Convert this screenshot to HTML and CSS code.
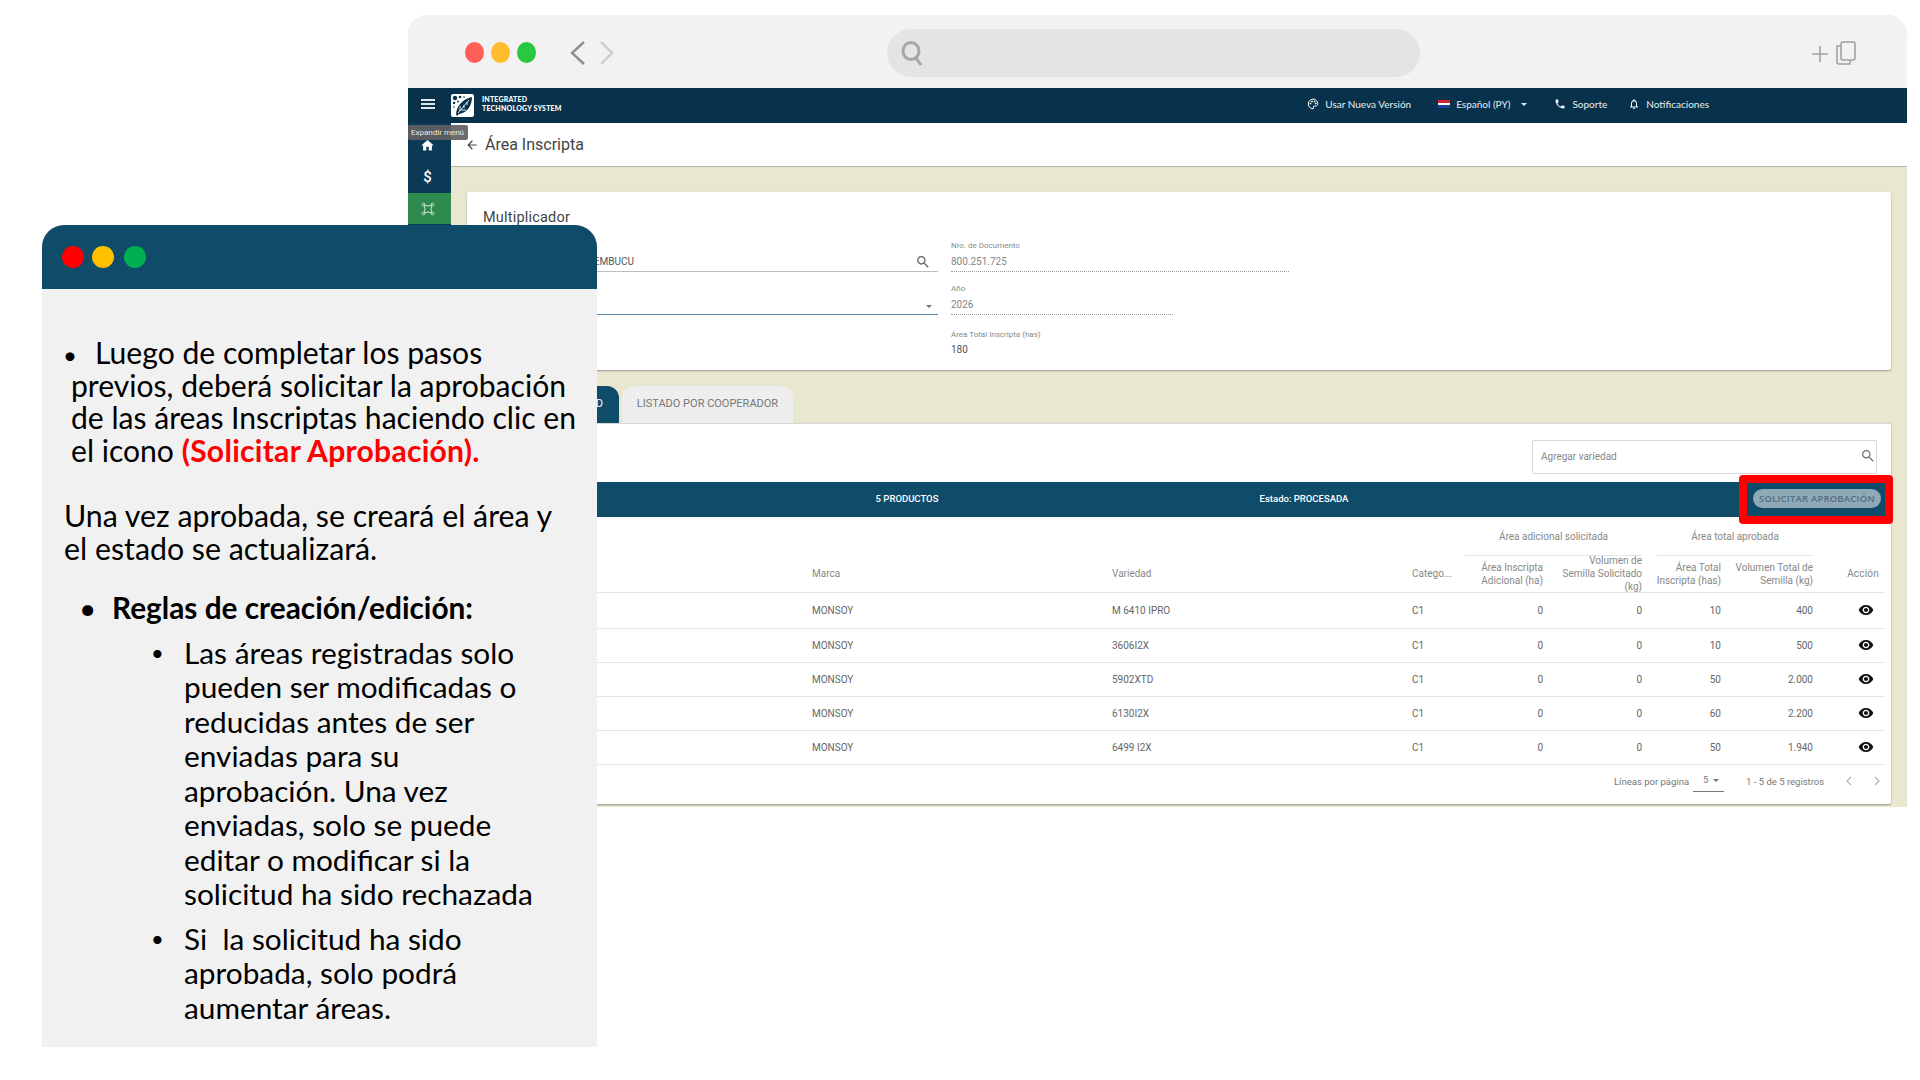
FILE: index.html
```html
<!DOCTYPE html>
<html lang="es">
<head>
<meta charset="UTF-8">
<meta name="viewport" content="width=device-width, initial-scale=1.0">
<title>Área Inscripta</title>
<link rel="stylesheet" href="styles.css">
</head>
<body>
  <svg class="sprites" width="0" height="0">
    <symbol id="eye" viewBox="0 0 24 24"><path d="M12 4.5C7 4.5 2.73 7.61 1 12c1.73 4.39 6 7.5 11 7.5s9.27-3.11 11-7.5c-1.73-4.39-6-7.5-11-7.5zM12 17c-2.76 0-5-2.24-5-5s2.24-5 5-5 5 2.24 5 5-2.24 5-5 5zm0-8c-1.66 0-3 1.34-3 3s1.34 3 3 3 3-1.34 3-3-1.34-3-3-3z"/></symbol>
    <symbol id="search" viewBox="0 0 24 24"><path d="M15.5 14h-.79l-.28-.27C15.41 12.59 16 11.11 16 9.5 16 5.91 13.09 3 9.5 3S3 5.91 3 9.5 5.91 16 9.5 16c1.61 0 3.09-.59 4.23-1.57l.27.28v.79l5 4.99L20.49 19l-4.99-5zm-6 0C7.01 14 5 11.99 5 9.5S7.01 5 9.5 5 14 7.01 14 9.5 11.99 14 9.5 14z"/></symbol>
  </svg>

  <!-- browser window -->
  <div class="browser">
    <div class="toolbar">
      <div class="dots">
        <span class="dot dot-red"></span>
        <span class="dot dot-yellow"></span>
        <span class="dot dot-green"></span>
      </div>
      <svg class="nav-arrows" width="44" height="24" viewBox="0 0 44 24" fill="none" stroke-width="2.4">
        <path d="M14 1 L2 12 L14 23" stroke="#8f8f8f"/>
        <path d="M31 1 L42 12 L31 23" stroke="#cbcbcb"/>
      </svg>
      <div class="address">
        <svg width="24" height="26" viewBox="0 0 24 26" fill="none" stroke="#a6a6a6" stroke-width="3">
          <ellipse cx="11" cy="11" rx="8" ry="8.5"/>
          <path d="M16 18 L21 25"/>
        </svg>
      </div>
      <svg class="tab-tools" width="46" height="24" viewBox="0 0 46 24" fill="none" stroke="#a0a0a0" stroke-width="1.6">
        <path d="M1 13 H17 M9 5 V21"/>
        <rect x="30" y="1" width="14" height="18" rx="2"/>
        <path d="M30 5 H26 V21 Q26 23 28 23 H39 V19"/>
      </svg>
    </div>

    <header class="app-header">
      <svg class="menu-icon" width="14" height="10" viewBox="0 0 14 10" fill="#e3e8ec">
        <rect width="14" height="2"/><rect y="4" width="14" height="2"/><rect y="8" width="14" height="2"/>
      </svg>
      <svg class="logo" width="23" height="23" viewBox="0 0 23 23">
        <rect width="23" height="23" rx="2" fill="#fff"/>
        <g fill="#08324b">
          <circle cx="4" cy="4" r="2.2"/><circle cx="9" cy="3" r="1.3"/><circle cx="13" cy="3" r="0.8"/>
          <circle cx="3" cy="9" r="1.2"/><circle cx="7" cy="7.5" r="0.9"/><circle cx="3" cy="13" r="0.8"/>
          <path d="M5 20 C6 11 12 5 21 3 C21 12 16 19 8 20 L6 22 Z"/>
        </g>
        <path d="M7 19 L18 6 M10 16 H15 M9 12 V17 M13 11 V14 M16 8 V11" stroke="#fff" stroke-width="0.9" fill="none"/>
      </svg>
      <div class="logo-text">INTEGRATED<br>TECHNOLOGY SYSTEM</div>
      <nav class="top-nav">
        <a class="nav-new">
          <svg width="12" height="12" viewBox="0 0 24 24" fill="none" stroke="#fff" stroke-width="2"><path d="M12 2.5C6.5 2.5 2.5 6.8 2.5 12s4.3 9.5 9.5 9.5c1 0 1.5-.7 1.5-1.5 0-1-.8-1.3-.8-2.3 0-1 .8-1.7 1.8-1.7H17c2.7 0 4.5-2 4.5-4.5 0-5-4.3-9.5-9.5-9.5z"/><circle cx="7" cy="11" r="1" fill="#fff"/><circle cx="10" cy="7" r="1" fill="#fff"/><circle cx="15" cy="7" r="1" fill="#fff"/><circle cx="17.5" cy="11" r="1" fill="#fff"/></svg>
          Usar Nueva Versión
        </a>
        <a class="nav-lang">
          <span class="flag"></span>
          Español (PY)
          <span class="caret"></span>
        </a>
        <a class="nav-support">
          <svg width="12" height="12" viewBox="0 0 24 24" fill="#fff"><path d="M6.62 10.79c1.44 2.83 3.76 5.14 6.59 6.59l2.2-2.2c.27-.27.67-.36 1.02-.24 1.12.37 2.33.57 3.57.57.55 0 1 .45 1 1V20c0 .55-.45 1-1 1-9.39 0-17-7.61-17-17 0-.55.45-1 1-1h3.5c.55 0 1 .45 1 1 0 1.25.2 2.45.57 3.57.11.35.03.74-.25 1.02l-2.2 2.2z"/></svg>
          Soporte
        </a>
        <a class="nav-bell">
          <svg width="12" height="12" viewBox="0 0 24 24" fill="#fff"><path d="M12 22c1.1 0 2-.9 2-2h-4c0 1.1.9 2 2 2zm6-6v-5c0-3.07-1.63-5.64-4.5-6.32V4c0-.83-.67-1.5-1.5-1.5s-1.5.67-1.5 1.5v.68C7.64 5.36 6 7.92 6 11v5l-2 2v1h16v-1l-2-2zm-2 1H8v-6c0-2.48 1.51-4.5 4-4.5s4 2.02 4 4.5v6z"/></svg>
          Notificaciones
        </a>
      </nav>
    </header>

    <div class="app-body">
      <aside class="sidebar">
        <div class="side-item side-home">
          <svg width="15" height="15" viewBox="0 0 24 24" fill="#fff"><path d="M10 20v-6h4v6h5v-8h3L12 3 2 12h3v8z"/></svg>
        </div>
        <div class="side-item side-money">$</div>
        <div class="side-item side-active">
          <svg width="14" height="14" viewBox="0 0 14 14" fill="none" stroke="#cfe3d5" stroke-width="1"><path d="M3 3 Q7 5 11 3 Q9 7 11 11 Q7 9 3 11 Q5 7 3 3Z"/><circle cx="2.5" cy="2.5" r="1.3"/><circle cx="11.5" cy="2.5" r="1.3"/><circle cx="2.5" cy="11.5" r="1.3"/><circle cx="11.5" cy="11.5" r="1.3"/></svg>
        </div>
        <div class="tooltip">Expandir menú</div>
      </aside>

      <main class="main">
        <div class="page-bar">
          <svg width="14" height="14" viewBox="0 0 24 24" fill="#444"><path d="M20 11H7.83l5.59-5.59L12 4l-8 8 8 8 1.41-1.41L7.83 13H20v-2z"/></svg>
          <h1>Área Inscripta</h1>
        </div>

        <div class="content">
          <section class="card card-top">
            <h2>Multiplicador</h2>
            <div class="form-grid">
              <div class="form-col">
                <div class="field">
                  <span class="field-label"></span>
                  <div class="field-value field-solid field-dept">
                    ÑEEMBUCU
                    <svg class="field-icon" width="16" height="16" fill="#666"><use href="#search"/></svg>
                  </div>
                </div>
                <div class="field field-second">
                  <span class="field-label"></span>
                  <div class="field-value field-focus"><span class="caret caret-dark"></span></div>
                </div>
              </div>
              <div class="form-col">
                <div class="field">
                  <span class="field-label">Nro. de Documento</span>
                  <div class="field-value field-dotted">800.251.725</div>
                </div>
                <div class="field field-second">
                  <span class="field-label">Año</span>
                  <div class="field-value field-dotted field-short">2026</div>
                </div>
                <div class="field field-third">
                  <span class="field-label">Área Total Inscripta (has)</span>
                  <div class="field-value field-plain">180</div>
                </div>
              </div>
            </div>
          </section>

          <div class="tabs">
            <div class="tab tab-active">LISTADO POR VARIEDAD</div>
            <div class="tab">LISTADO POR COOPERADOR</div>
          </div>

          <section class="card card-table">
            <div class="add-row">
              <div class="add-box">
                Agregar variedad
                <svg width="16" height="16" fill="#777"><use href="#search"/></svg>
              </div>
            </div>

            <div class="status-bar">
              <span class="bar-count">5 PRODUCTOS</span>
              <span class="bar-state">Estado: PROCESADA</span>
              <button class="request-btn">SOLICITAR APROBACIÓN</button>
              <div class="highlight"></div>
            </div>

            <div class="table">
              <div class="row-groups">
                <div class="group group-add">Área adicional solicitada</div>
                <div class="group group-total">Área total aprobada</div>
              </div>
              <div class="row row-head">
                <div></div>
                <div>Marca</div>
                <div>Variedad</div>
                <div>Catego...</div>
                <div class="num">Área Inscripta<br>Adicional (ha)</div>
                <div class="num">Volumen de<br>Semilla Solicitado<br>(kg)</div>
                <div class="num">Área Total<br>Inscripta (has)</div>
                <div class="num">Volumen Total de<br>Semilla (kg)</div>
                <div class="act">Acción</div>
              </div>
              <div class="row">
                <div></div><div>MONSOY</div><div>M 6410 IPRO</div><div>C1</div>
                <div class="num">0</div><div class="num">0</div><div class="num">10</div><div class="num">400</div>
                <div class="act"><svg class="eye"><use href="#eye"/></svg></div>
              </div>
              <div class="row">
                <div></div><div>MONSOY</div><div>3606I2X</div><div>C1</div>
                <div class="num">0</div><div class="num">0</div><div class="num">10</div><div class="num">500</div>
                <div class="act"><svg class="eye"><use href="#eye"/></svg></div>
              </div>
              <div class="row">
                <div></div><div>MONSOY</div><div>5902XTD</div><div>C1</div>
                <div class="num">0</div><div class="num">0</div><div class="num">50</div><div class="num">2.000</div>
                <div class="act"><svg class="eye"><use href="#eye"/></svg></div>
              </div>
              <div class="row">
                <div></div><div>MONSOY</div><div>6130I2X</div><div>C1</div>
                <div class="num">0</div><div class="num">0</div><div class="num">60</div><div class="num">2.200</div>
                <div class="act"><svg class="eye"><use href="#eye"/></svg></div>
              </div>
              <div class="row">
                <div></div><div>MONSOY</div><div>6499 I2X</div><div>C1</div>
                <div class="num">0</div><div class="num">0</div><div class="num">50</div><div class="num">1.940</div>
                <div class="act"><svg class="eye"><use href="#eye"/></svg></div>
              </div>
            </div>

            <div class="pager">
              <span>Líneas por página</span>
              <span class="pager-select">5 <span class="caret caret-dark"></span></span>
              <span class="pager-count">1 - 5 de 5 registros</span>
              <svg width="34" height="10" viewBox="0 0 34 10" fill="none" stroke="#b5b5b5" stroke-width="1.2">
                <path d="M5 1 L1 5 L5 9"/><path d="M29 1 L33 5 L29 9"/>
              </svg>
            </div>
          </section>
        </div>
      </main>
    </div>
  </div>

  <!-- instructions window -->
  <div class="panel">
    <div class="panel-head">
      <span class="pdot pdot-red"></span>
      <span class="pdot pdot-yellow"></span>
      <span class="pdot pdot-green"></span>
    </div>
    <div class="panel-body">
      <p class="intro"><span class="bullet">•</span>Luego de completar los pasos<br>previos, deberá solicitar la aprobación<br>de las áreas Inscriptas haciendo clic en<br>el icono <strong class="red">(Solicitar Aprobación).</strong></p>
      <p class="after">Una vez aprobada, se creará el área y<br>el estado se actualizará.</p>
      <p class="rules"><span class="rules-bullet">•</span><strong>Reglas de creación/edición:</strong></p>
      <ul class="sub-list">
        <li>Las áreas registradas solo<br>pueden ser modificadas o<br>reducidas antes de ser<br>enviadas para su<br>aprobación. Una vez<br>enviadas, solo se puede<br>editar o modificar si la<br>solicitud ha sido rechazada</li>
        <li>Si&nbsp; la solicitud ha sido<br>aprobada, solo podrá<br>aumentar áreas.</li>
      </ul>
    </div>
  </div>
</body>
</html>
```

FILE: styles.css
```css
* {
  box-sizing: border-box;
}
html, body {
  margin: 0;
  height: 1080px;
  overflow: hidden;
  background: #fff;
}
body {
  position: relative;
  font-family: Roboto, "Liberation Sans", sans-serif;
  color: #666;
}
.sprites {
  position: absolute;
}

/* browser window */
.browser {
  position: absolute;
  left: 408px;
  top: 15px;
  width: 1499px;
  height: 792px;
  border-radius: 20px 20px 0 0;
  overflow: hidden;
  background: #e9e7cf;
  display: flex;
  flex-direction: column;
}
.toolbar {
  height: 73px;
  background: #f2f2f2;
  display: flex;
  align-items: center;
  padding: 2px 50px 0 57px;
  flex: none;
}
.dots {
  display: flex;
  gap: 7px;
}
.dot {
  width: 19px;
  height: 21px;
  border-radius: 50%;
}
.dot-red { background: #ff5f57; }
.dot-yellow { background: #febc2e; }
.dot-green { background: #28c840; }
.nav-arrows {
  margin-left: 34px;
}
.address {
  margin-left: 273px;
  width: 533px;
  height: 48px;
  border-radius: 24px;
  background: #e4e4e4;
  display: flex;
  align-items: center;
  padding-left: 13px;
}
.tab-tools {
  margin-left: auto;
}

/* app header */
.app-header {
  height: 35px;
  flex: none;
  background: #08324b;
  display: flex;
  align-items: center;
  padding-bottom: 3px;
  color: #fff;
}
.menu-icon {
  margin-left: 13px;
}
.logo {
  margin-left: 16px;
  margin-top: 2px;
}
.logo-text {
  margin-left: 8px;
  font-family: Lato, sans-serif;
  font-size: 7px;
  font-weight: 900;
  line-height: 9px;
  letter-spacing: .2px;
}
.top-nav {
  margin-left: auto;
  padding-right: 198px;
  display: flex;
  align-items: center;
  font-family: Lato, sans-serif;
  font-size: 10px;
  color: #e8eef2;
}
.top-nav a {
  display: flex;
  align-items: center;
  gap: 6px;
}
.nav-lang {
  margin-left: 27px;
}
.nav-support {
  margin-left: 27px;
}
.nav-bell {
  margin-left: 21px;
}
.flag {
  width: 12px;
  height: 8px;
  background: linear-gradient(#d5232f 0 33%, #fff 33% 66%, #1a3f9c 66%);
}
.caret {
  width: 0;
  height: 0;
  border-left: 3px solid transparent;
  border-right: 3px solid transparent;
  border-top: 3px solid #dfe6ea;
  margin-left: 5px;
  display: inline-block;
}
.caret-dark {
  border-top-color: #757575;
}

/* sidebar */
.app-body {
  flex: 1;
  display: flex;
  min-height: 0;
}
.sidebar {
  width: 43px;
  flex: none;
  background: #0a3a55;
  position: relative;
}
.side-item {
  height: 32px;
  display: flex;
  align-items: center;
  justify-content: center;
  padding-right: 4px;
  color: #fff;
}
.side-home {
  height: 38px;
  padding-top: 6px;
}
.side-money {
  font-size: 15px;
  font-weight: 500;
}
.side-active {
  height: 31px;
  background: #2e8b4e;
}
.tooltip {
  position: absolute;
  left: 0;
  top: 2px;
  width: 60px;
  height: 15px;
  border-radius: 2px;
  background: rgba(97, 97, 97, .92);
  color: #e8e8e8;
  font-size: 8px;
  line-height: 15px;
  padding-left: 3px;
  white-space: nowrap;
  z-index: 2;
}

/* page */
.main {
  flex: 1;
  min-width: 0;
  display: flex;
  flex-direction: column;
}
.page-bar {
  height: 44px;
  flex: none;
  background: #fff;
  border-bottom: 1px solid #b9b9a8;
  display: flex;
  align-items: center;
  padding-left: 14px;
  gap: 6px;
}
h1 {
  margin: 0;
  font-size: 16px;
  font-weight: 400;
  color: #444;
}
.content {
  flex: 1;
  padding: 25px 16px 0 16px;
}
.card {
  background: #fff;
  border-radius: 2px;
  box-shadow: 0 1px 2px rgba(0, 0, 0, .35);
}
.card-top {
  height: 178px;
  padding: 16px 15px 0;
}
h2 {
  margin: 0 0 0 1px;
  font-size: 14.5px;
  line-height: 20px;
  font-weight: 400;
  color: #444;
  letter-spacing: .2px;
}
.form-grid {
  margin-top: 13px;
  display: grid;
  grid-template-columns: 456px 338px;
  column-gap: 13px;
}
.field-label {
  display: block;
  height: 10px;
  font-size: 8px;
  line-height: 10px;
  color: #8a8a8a;
}
.field-value {
  position: relative;
  margin-top: 3px;
  height: 18px;
  font-size: 10px;
  line-height: 15px;
  color: #858585;
}
.field-second {
  margin-top: 12px;
}
.field-third {
  margin-top: 15px;
}
.field-solid {
  border-bottom: 1px solid #bdbdbd;
}
.field-dept {
  padding-left: 99px;
  color: #555;
}
.field-focus {
  border-bottom: 1px solid #5a87a3;
  text-align: right;
  padding-right: 6px;
}
.field-icon {
  position: absolute;
  right: 7px;
  top: 0;
}
.field-dotted {
  border-bottom: 1px dotted #9a9a9a;
}
.field-short {
  width: 222px;
}
.field-plain {
  margin-top: 1px;
  line-height: 17px;
  color: #555;
}
.tabs {
  margin-top: 16px;
  height: 37px;
  display: flex;
  gap: 3px;
}
.tab {
  width: 171px;
  background: #eee;
  border-radius: 12px 12px 0 0;
  font-size: 11px;
  line-height: 36px;
  text-align: center;
  color: #777;
}
.tab-active {
  width: 152px;
  background: #0f4c69;
  color: #fff;
  padding-right: 16px;
  text-align: right;
}

/* table card */
.card-table {
  height: 381px;
  border-radius: 0 0 2px 2px;
  border-top: 1px solid #d8d8d8;
}
.add-row {
  height: 58px;
  padding: 16px 14px 0 0;
  display: flex;
  justify-content: flex-end;
}
.add-box {
  width: 345px;
  height: 34px;
  border: 1px solid #d9d9d9;
  border-radius: 2px;
  padding: 0 0 2px 8px;
  display: flex;
  align-items: center;
  justify-content: space-between;
  font-size: 10px;
  color: #888;
}
.status-bar {
  position: relative;
  height: 35px;
  margin-right: 6px;
  background: #0f4c69;
  display: flex;
  align-items: center;
  padding-bottom: 3px;
  color: #fff;
  font-size: 9.5px;
  font-weight: 500;
}
.bar-count {
  margin-left: 340px;
  width: 200px;
  text-align: center;
}
.bar-state {
  margin-left: 197px;
  width: 200px;
  text-align: center;
}
.request-btn {
  margin-left: auto;
  margin-right: 4px;
  width: 128px;
  height: 19px;
  padding: 0;
  border: 0;
  border-radius: 10px;
  background: #8fa9b8;
  color: #4f6e80;
  font-family: "Open Sans", sans-serif;
  font-size: 9.5px;
  font-weight: 600;
  letter-spacing: .2px;
  white-space: nowrap;
}
.highlight {
  position: absolute;
  right: -8px;
  top: -7px;
  bottom: -7px;
  width: 154px;
  border: 8px solid #f00;
  border-radius: 4px;
}
.table {
  margin-right: 6px;
  font-size: 10px;
}
.row-groups {
  height: 39px;
  display: flex;
  color: #888;
  line-height: 39px;
  text-align: center;
}
.group {
  border-bottom: 1px solid #e4e4e4;
}
.group-add {
  margin-left: 998px;
  width: 177px;
}
.group-total {
  margin-left: 15px;
  width: 156px;
}
.row {
  display: grid;
  grid-template-columns: 345px 300px 300px 53px 78px 99px 79px 92px 72px;
  align-items: center;
  height: 34px;
  padding-bottom: 1px;
  border-bottom: 1px solid #e4e4e4;
  color: #666;
}
.row-head {
  height: 37px;
  padding-bottom: 0;
  grid-template-rows: 35px;
  line-height: 13px;
  color: #888;
}
.row-head + .row {
  height: 36px;
}
.num {
  text-align: right;
  white-space: nowrap;
}
.act {
  display: flex;
  justify-content: flex-end;
  padding-right: 11px;
}
.row-head .act {
  padding-right: 6px;
  letter-spacing: .2px;
}
.eye {
  width: 16px;
  height: 16px;
  fill: #111;
}
.pager {
  height: 36px;
  display: flex;
  align-items: center;
  padding: 0 0 4px 1147px;
  font-size: 9.5px;
  color: #777;
}
.pager-select {
  margin-left: 4px;
  width: 31px;
  height: 22px;
  line-height: 20px;
  padding-left: 10px;
  border-bottom: 1px solid #777;
  white-space: nowrap;
}
.pager-select .caret {
  margin-left: 2px;
  vertical-align: middle;
}
.pager-count {
  margin-left: 22px;
  margin-right: 22px;
}

/* instructions panel */
.panel {
  position: absolute;
  left: 42px;
  top: 225px;
  width: 555px;
  height: 822px;
  border-radius: 22px 22px 0 0;
  overflow: hidden;
  background: #f1f1f1;
  color: #000;
  font-family: Lato, sans-serif;
  z-index: 3;
}
.panel-head {
  height: 64px;
  background: #0f4c69;
  display: flex;
  align-items: center;
  padding-left: 20px;
  gap: 8px;
}
.pdot {
  width: 22px;
  height: 22px;
  border-radius: 50%;
}
.pdot-red { background: #f00; }
.pdot-yellow { background: #ffc000; margin-right: 2px; }
.pdot-green { background: #00b050; }
.panel-body {
  padding-top: 47px;
  font-size: 29.8px;
  line-height: 32.5px;
  white-space: nowrap;
}
.panel-body p {
  margin: 0;
}
.panel-body .intro {
  padding-left: 29px;
  font-size: 30.1px;
}
.bullet {
  display: inline-block;
  width: 32px;
  margin-left: -8px;
  font-size: 24px;
  line-height: 1;
}
.red {
  color: #f00;
  letter-spacing: .25px;
}
.panel-body .after {
  margin-top: 33px;
  padding-left: 22px;
  font-size: 30.3px;
}
.panel-body .rules {
  margin-top: 27px;
  padding-left: 37px;
  line-height: 34px;
}
.rules-bullet {
  display: inline-block;
  width: 33px;
}
.sub-list {
  list-style: none;
  margin: 10.5px 0 0;
  padding: 0 0 0 142px;
  line-height: 34.5px;
}
.sub-list li {
  position: relative;
  margin-bottom: 10px;
}
.sub-list li::before {
  content: "•";
  position: absolute;
  left: -33px;
  font-size: 22px;
}
```
